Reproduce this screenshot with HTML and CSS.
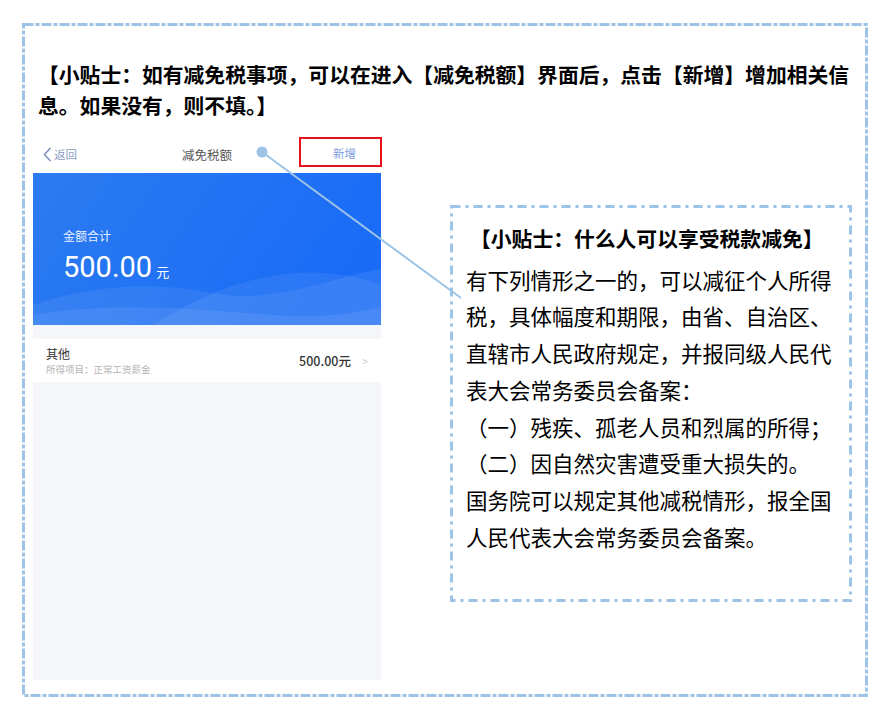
FILE: index.html
```html
<!DOCTYPE html>
<html lang="zh-CN">
<head>
  <meta charset="UTF-8" />
  <meta name="viewport" content="width=device-width, initial-scale=1.0" />
  <title>小贴士：减免税额</title>
  <link rel="stylesheet" href="styles.css">
</head>
<body>

  <div class="frame">
    <!-- dash-dot page frame -->
    <svg class="frame-border" width="846" height="674">
      <rect x="1.5" y="1.5" width="843" height="671" fill="none" stroke="#9dc3e6" stroke-width="3" stroke-dasharray="10 2 4 2" />
    </svg>

    <p class="heading">【小贴士：如有减免税事项，可以在进入【减免税额】界面后，点击【新增】增加相关信息。如果没有，则不填。】</p>

    <div class="content">
      <!-- Phone screenshot -->
      <div class="phone">
        <div class="nav">
          <div class="nav-back">
            <svg width="9" height="15" viewBox="0 0 9 15"><path d="M7.5 1 L1.5 7.5 L7.5 14" fill="none" stroke="#7f93c0" stroke-width="1.6" /></svg>
            <span>返回</span>
          </div>
          <div class="nav-title">减免税额</div>
          <div class="nav-add">新增</div>
        </div>

        <div class="total-card">
          <svg class="waves" width="348" height="152" viewBox="0 0 348 152" preserveAspectRatio="none">
            <defs>
              <linearGradient id="bg" x1="0" y1="0" x2="1" y2="0.3">
                <stop offset="0" stop-color="#2c7bf1" />
                <stop offset="1" stop-color="#1a6cf6" />
              </linearGradient>
            </defs>
            <rect width="348" height="152" fill="url(#bg)" />
            <path d="M0 132 C60 112 120 108 180 120 C240 132 300 104 348 96 L348 152 L0 152 Z" fill="#ffffff" fill-opacity="0.07" />
            <path d="M120 152 C170 120 230 96 290 100 C320 102 338 108 348 112 L348 152 Z" fill="#ffffff" fill-opacity="0.07" />
            <path d="M0 142 C80 128 160 136 240 142 C290 146 320 140 348 134 L348 152 L0 152 Z" fill="#ffffff" fill-opacity="0.08" />
          </svg>
          <div class="total-label">金额合计</div>
          <div class="total-amount">500.00<span>元</span></div>
        </div>

        <div class="item-row">
          <div class="item-info">
            <div class="item-name">其他</div>
            <div class="item-desc">所得项目：正常工资薪金</div>
          </div>
          <div class="item-value">500.00元</div>
          <div class="item-arrow">&gt;</div>
        </div>
      </div>

      <!-- Tip box -->
      <div class="tip">
        <svg class="tip-border" width="402" height="397">
          <rect x="1.5" y="1.5" width="399" height="394" fill="none" stroke="#9dc3e6" stroke-width="3" stroke-dasharray="9 5 3 5" />
        </svg>
        <p class="tip-title">【小贴士：什么人可以享受税款减免】</p>
        <p class="tip-text">有下列情形之一的，可以减征个人所得税，具体幅度和期限，由省、自治区、直辖市人民政府规定，并报同级人民代表大会常务委员会备案：</p>
        <p class="tip-text">（一）残疾、孤老人员和烈属的所得；</p>
        <p class="tip-text">（二）因自然灾害遭受重大损失的。</p>
        <p class="tip-text">国务院可以规定其他减税情形，报全国人民代表大会常务委员会备案。</p>
      </div>

      <!-- callout connector -->
      <svg class="connector" width="450" height="170">
        <line x1="240" y1="15" x2="439" y2="161" stroke="#9dc3e6" stroke-width="2" />
        <circle cx="240" cy="15" r="5.5" fill="#9dc3e6" />
      </svg>
    </div>
  </div>

</body>
</html>
```

FILE: styles.css
```css
body {
  margin: 0;
  background: #ffffff;
  font-family: "Noto Sans CJK SC", "Noto Sans", sans-serif;
}

.frame {
  position: relative;
  width: 846px;
  height: 674px;
  margin: 23px 0 0 22px;
  box-sizing: border-box;
}

.frame-border {
  position: absolute;
  left: 0;
  top: 0;
}

.heading {
  margin: 0;
  padding: 36px 2px 0 16px;
  font-size: 20.8px;
  line-height: 31px;
  font-weight: bold;
  color: #000;
}

/* Content row */
.content {
  position: relative;
  display: flex;
  align-items: flex-start;
  margin-top: 16px;
  padding-left: 11px;
}

/* Phone */
.phone {
  width: 348px;
  height: 543px;
  background: #f5f6fa;
  display: flex;
  flex-direction: column;
}

.nav {
  height: 36px;
  background: #fff;
  display: flex;
  align-items: flex-start;
  position: relative;
}

.nav-back {
  display: flex;
  align-items: center;
  gap: 2px;
  margin: 9px 0 0 10px;
  font-size: 11.5px;
  color: #8a9cc4;
}

.nav-title {
  position: absolute;
  left: 0;
  right: 0;
  top: 8px;
  text-align: center;
  font-size: 12.5px;
  color: #555;
}

.nav-add {
  margin-left: auto;
  margin-right: -1px;
  width: 79px;
  height: 26px;
  border: 2px solid #e8101a;
  box-sizing: content-box;
  font-size: 11.5px;
  color: #7d9be0;
  text-align: center;
  line-height: 28px;
  text-indent: 8px;
  position: relative;
  z-index: 1;
}

.total-card {
  position: relative;
  height: 152px;
  color: #fff;
  padding: 55px 0 0 30px;
  box-sizing: border-box;
}

.waves {
  position: absolute;
  left: 0;
  top: 0;
}

.total-label {
  position: relative;
  font-size: 12px;
  line-height: 16px;
  color: rgba(255, 255, 255, 0.9);
}

.total-amount {
  position: relative;
  margin-top: 6px;
  font-family: Roboto, "Noto Sans", sans-serif;
  font-size: 29px;
  line-height: 34px;
}

.total-amount span {
  font-family: "Noto Sans CJK SC", sans-serif;
  font-size: 13px;
  margin-left: 4px;
}

.item-row {
  margin-top: 14px;
  height: 43px;
  background: #fff;
  display: flex;
  align-items: center;
  padding: 0 13px 0 13px;
}

.item-info {
  flex-grow: 1;
  display: flex;
  flex-direction: column;
  gap: 1px;
}

.item-name {
  font-size: 12px;
  line-height: 16px;
  color: #333;
}

.item-desc {
  font-size: 9.5px;
  line-height: 13px;
  color: #b4b4b4;
}

.item-value {
  font-size: 12.5px;
  color: #333;
  font-weight: 500;
}

.item-arrow {
  margin-left: 11px;
  font-size: 11px;
  color: #cfcfcf;
}

/* Tip box */
.tip {
  position: relative;
  width: 402px;
  height: 397px;
  margin: 68px 0 0 69px;
  padding: 15px 0 0 16px;
  box-sizing: border-box;
}

.tip-border {
  position: absolute;
  left: 0;
  top: 0;
}

.tip-title {
  position: relative;
  margin: 0 0 5px;
  padding-left: 4px;
  font-size: 20.8px;
  line-height: 36.7px;
  font-weight: bold;
  color: #000;
}

.tip-text {
  position: relative;
  margin: 0;
  width: 380px;
  font-size: 21.5px;
  line-height: 36.7px;
  color: #000;
}

.connector {
  position: absolute;
  left: 0;
  top: 0;
  pointer-events: none;
}
```
